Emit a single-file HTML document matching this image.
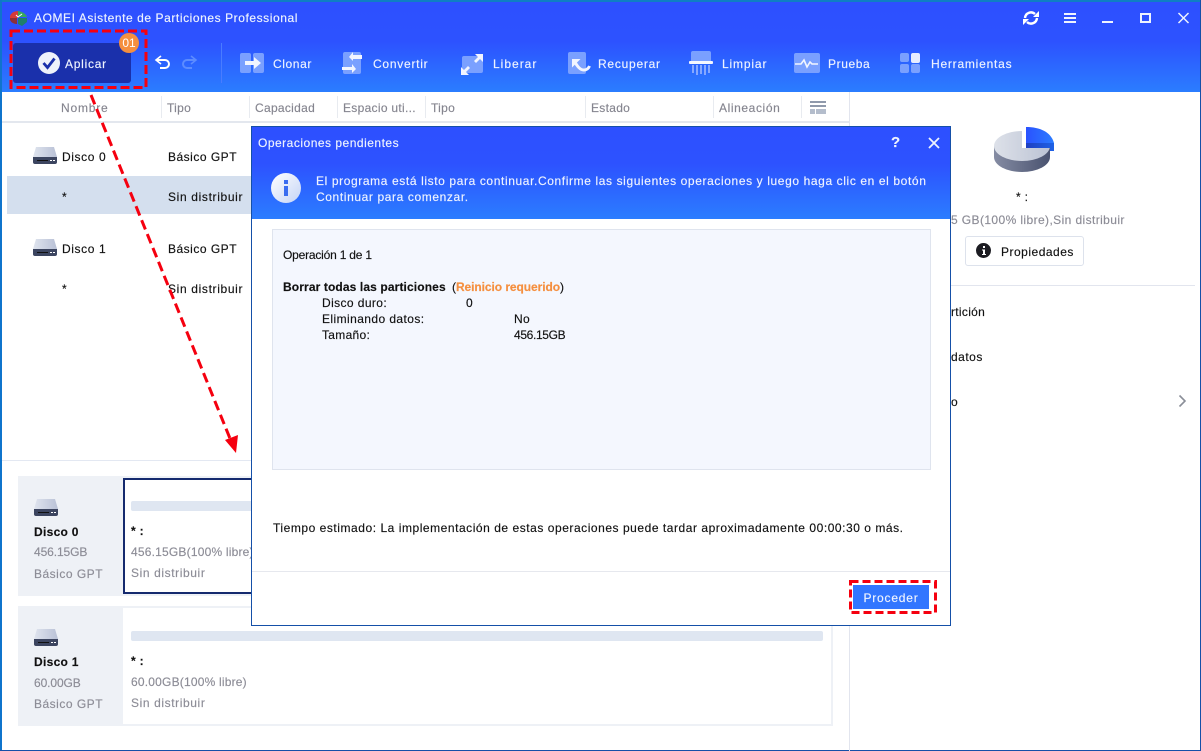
<!DOCTYPE html>
<html><head><meta charset="utf-8"><style>
html,body{margin:0;padding:0;background:#fff}
#r{position:relative;width:1201px;height:751px;overflow:hidden;background:#fff;font-family:"Liberation Sans",sans-serif;font-size:12px;color:#111}
#r div{position:absolute}
.t{white-space:nowrap;line-height:16px;letter-spacing:.3px;-webkit-text-stroke:.15px currentColor}
.w{color:#eef3ff}
.g{color:#8c8c96}
.h{color:#85858f}
svg{position:absolute;overflow:visible}
</style></head><body><div id="r">
<div style="left:0;top:0;width:1201px;height:92px;background:linear-gradient(#2d50ff 0,#2d52ff 45%,#2b7dff 100%)"></div>
<div style="left:0;top:0;width:1201px;height:2px;background:#0f7fc4"></div>
<div style="left:0;top:0;width:2px;height:751px;background:#0f74cc"></div>
<div style="left:1200px;top:0;width:1px;height:751px;background:#1550a8"></div>
<div style="left:0;top:750px;width:1201px;height:1px;background:#1550a8"></div>

<svg style="left:9px;top:10px" width="20" height="16" viewBox="0 0 20 16"><path d="M1 6Q3 1 9 1V8L1 8Z" fill="#d43a3a"/><path d="M1 8H8V14Q3 14 1 10Z" fill="#8c2f3a"/><path d="M9 1Q16 2 18 7H9Z" fill="#38a85a"/><path d="M9 8H18V12L13 16 9 14Z" fill="#1f7f6a"/><path d="M7 5l2 2 4-3" stroke="#fff" fill="none"/></svg>
<div class="t w" style="left:34px;top:10px;letter-spacing:.57px">AOMEI Asistente de Particiones Professional</div>

<svg style="left:1023px;top:10px" width="16" height="16" viewBox="0 0 16 16" fill="none" stroke="#fff" stroke-width="2.400"><path d="M2 8a6 6 0 0 1 10-4"/><path d="M14 8a6 6 0 0 1-10 4"/><path d="M10 7h6V1z" fill="#fff" stroke="none"/><path d="M6 9H0v6z" fill="#fff" stroke="none"/></svg>
<div style="left:1064px;top:13px;width:12px;height:2px;background:#eef3ff"></div>
<div style="left:1064px;top:17px;width:12px;height:2px;background:#eef3ff"></div>
<div style="left:1064px;top:21px;width:12px;height:2px;background:#eef3ff"></div>
<div style="left:1102px;top:21px;width:11px;height:2px;background:#eef3ff"></div>
<div style="left:1140px;top:13px;width:7px;height:6px;border:2px solid #eef3ff"></div>
<svg style="left:1178px;top:13px" width="11" height="10" viewBox="0 0 11 10" stroke="#eef3ff" stroke-width="1.500"><path d="M.5 0l10 10M10.500 0L.5 10"/></svg>

<div style="left:13px;top:43px;width:118px;height:40px;background:#1a30ab;border-radius:3px"></div>
<svg style="left:38px;top:52px" width="22" height="22" viewBox="0 0 22 22"><circle cx="11" cy="11" r="11" fill="#eef2fb"/><path d="M5.500 11l4 4.500 7-9" stroke="#1a30ab" stroke-width="2.800" fill="none"/></svg>
<div class="t w" style="left:65px;top:56px;letter-spacing:.75px">Aplicar</div>
<div style="left:119px;top:33px;width:20px;height:20px;border-radius:50%;background:#f58f3f;color:#fff;text-align:center;line-height:20px;font-size:12px">01</div>
<svg style="left:155px;top:56px" width="16" height="14" viewBox="0 0 16 14" fill="none" stroke="#fff" stroke-width="2"><path d="M2 4h8a3.500 3.500 0 0 1 0 8H5"/><path d="M6 0L1 4l5 4" stroke-width="1.600"/></svg>
<svg style="left:181px;top:56px" width="16" height="14" viewBox="0 0 16 14" fill="none" stroke="#5c8cff" stroke-width="2"><path d="M14 4H6a3.500 3.500 0 0 0 0 8h5"/><path d="M10 0l5 4-5 4" stroke-width="1.600"/></svg>
<div style="left:221px;top:43px;width:1px;height:40px;background:#4a7cff"></div>

<svg style="left:240px;top:53px" width="24" height="20" viewBox="0 0 24 20"><rect x="0" y="0" width="11" height="20" rx="2" fill="#7aa0ff"/><rect x="13" y="0" width="11" height="20" rx="2" fill="#7aa0ff"/><path d="M5 8h9V4l7 6-7 6v-4H5z" fill="#f2f5ff"/></svg>
<div class="t w" style="left:273px;top:56px;letter-spacing:.6px">Clonar</div>
<svg style="left:342px;top:52px" width="20" height="22" viewBox="0 0 20 22"><rect x="1" y="0" width="18" height="22" rx="2" fill="#7aa0ff"/><path d="M20 3h-9V0l-4 5 4 4V7h9zM0 15h10v-3l4 5-4 4v-3H0z" fill="#f2f5ff"/></svg>
<div class="t w" style="left:373px;top:56px;letter-spacing:.75px">Convertir</div>
<svg style="left:461px;top:54px" width="23" height="21" viewBox="0 0 23 21"><rect x="1" y="2" width="21" height="17" rx="2" fill="#7aa0ff"/><path d="M14 0h8v8l-3-3-4 4-2-2 4-4zM0 21v-8l3 3 4-4 2 2-4 4 3 3z" fill="#f2f5ff"/></svg>
<div class="t w" style="left:493px;top:56px;letter-spacing:1px">Liberar</div>
<svg style="left:568px;top:52px" width="23" height="22" viewBox="0 0 23 22"><rect x="0" y="0" width="18" height="22" rx="2" fill="#7aa0ff"/><path d="M4 7h8.500L4 15.500z" fill="#f2f5ff"/><path d="M6.500 9.500c3 5 5.500 8.500 9.500 8.500 2.500 0 4.500-1.500 5.500-4" fill="none" stroke="#f2f5ff" stroke-width="3"/></svg>
<div class="t w" style="left:598px;top:56px;letter-spacing:.75px">Recuperar</div>
<svg style="left:689px;top:51px" width="24" height="24" viewBox="0 0 24 24"><rect x="2" y="0" width="20" height="12" rx="2" fill="#7aa0ff"/><rect x="0" y="10" width="24" height="3" rx="1" fill="#f4f7ff"/><path d="M3 14h2v8H3zM7 14h2v10H7zM11 14h2v9h-2zM15 14h2v10h-2zM19 14h2v8h-2z" fill="#86a8ff"/></svg>
<div class="t w" style="left:722px;top:56px;letter-spacing:.85px">Limpiar</div>
<svg style="left:794px;top:53px" width="26" height="20" viewBox="0 0 26 20"><rect width="26" height="20" rx="2" fill="#7aa0ff"/><path d="M1 11h6l3-4 3 7 3-5 2 2h6" stroke="#f2f5ff" stroke-width="1.600" fill="none"/></svg>
<div class="t w" style="left:828px;top:56px;letter-spacing:.6px">Prueba</div>
<svg style="left:900px;top:53px" width="20" height="20" viewBox="0 0 20 20"><rect width="9" height="9" rx="2" fill="#7aa0ff"/><rect x="11" width="9" height="10" rx="2" fill="#e6ecff"/><rect y="11" width="9" height="9" rx="2" fill="#7aa0ff"/><rect x="11" y="11" width="9" height="9" rx="2" fill="#7aa0ff"/></svg>
<div class="t w" style="left:931px;top:56px;letter-spacing:.78px">Herramientas</div>

<div style="left:849px;top:92px;width:1px;height:659px;background:#e2e5ee"></div>
<div style="left:2px;top:121px;width:847px;height:2px;background:#e3e7ee"></div>
<div style="left:161px;top:96px;width:1px;height:22px;background:#e8ebf0"></div>
<div style="left:249px;top:96px;width:1px;height:22px;background:#e8ebf0"></div>
<div style="left:337px;top:96px;width:1px;height:22px;background:#e8ebf0"></div>
<div style="left:425px;top:96px;width:1px;height:22px;background:#e8ebf0"></div>
<div style="left:585px;top:96px;width:1px;height:22px;background:#e8ebf0"></div>
<div style="left:713px;top:96px;width:1px;height:22px;background:#e8ebf0"></div>
<div style="left:801px;top:96px;width:1px;height:22px;background:#e8ebf0"></div>
<div class="t h" style="left:61px;top:100px;letter-spacing:.8px">Nombre</div>
<div class="t h" style="left:167px;top:100px">Tipo</div>
<div class="t h" style="left:255px;top:100px">Capacidad</div>
<div class="t h" style="left:343px;top:100px">Espacio uti...</div>
<div class="t h" style="left:431px;top:100px">Tipo</div>
<div class="t h" style="left:591px;top:100px">Estado</div>
<div class="t h" style="left:719px;top:100px;letter-spacing:.6px">Alineación</div>
<svg style="left:810px;top:101px" width="16" height="13" viewBox="0 0 16 13"><path d="M0 0h16v2H0zM0 4h16v2H0z" fill="#8f99ab"/><path d="M0 8h5v5H0zM6 8h10v5H6z" fill="#b4bdcc"/></svg>

<div style="left:7px;top:176px;width:245px;height:38px;background:#d4dfee"></div>
<svg style="left:33px;top:147px" width="24" height="17" viewBox="0 0 24 17"><defs><linearGradient id="dg" x1="0" x2="1"><stop offset="0" stop-color="#dfe4ee"/><stop offset="1" stop-color="#b9c1d6"/></linearGradient></defs><path d="M3 0h18l3 10H0z" fill="url(#dg)"/><path d="M0 10h24v5a2 2 0 0 1-2 2H2a2 2 0 0 1-2-2z" fill="#3c4560"/><path d="M4 13h11v1H4z" fill="#111"/><path d="M17 13h2v1h-2zM20 13h2v1h-2z" fill="#fff"/></svg>
<svg style="left:33px;top:239px" width="24" height="17" viewBox="0 0 24 17"><path d="M3 0h18l3 10H0z" fill="url(#dg)"/><path d="M0 10h24v5a2 2 0 0 1-2 2H2a2 2 0 0 1-2-2z" fill="#3c4560"/><path d="M4 13h11v1H4z" fill="#111"/><path d="M17 13h2v1h-2zM20 13h2v1h-2z" fill="#fff"/></svg>
<div class="t" style="left:62px;top:149px;letter-spacing:.6px">Disco 0</div>
<div class="t" style="left:168px;top:149px;letter-spacing:.5px">Básico GPT</div>
<div class="t" style="left:62px;top:189px">*</div>
<div class="t" style="left:168px;top:189px;letter-spacing:.65px">Sin distribuir</div>
<div class="t" style="left:62px;top:241px;letter-spacing:.6px">Disco 1</div>
<div class="t" style="left:168px;top:241px;letter-spacing:.5px">Básico GPT</div>
<div class="t" style="left:62px;top:281px">*</div>
<div class="t" style="left:168px;top:281px;letter-spacing:.65px">Sin distribuir</div>

<div style="left:2px;top:460px;width:847px;height:1px;background:#e3e8f2"></div>
<div style="left:18px;top:476px;width:105px;height:120px;background:#eef1f6"></div>
<div style="left:123px;top:476px;width:710px;height:120px;background:#eef1f6"></div>
<div style="left:123px;top:478px;width:702px;height:112px;background:#fff;border:2px solid #152a6e"></div>
<div style="left:131px;top:501px;width:692px;height:10px;background:#dfe6f1;border-radius:2px"></div>
<div style="left:18px;top:606px;width:815px;height:120px;background:#eef1f6"></div>
<div style="left:123px;top:608px;width:708px;height:116px;background:#fff"></div>
<div style="left:131px;top:631px;width:692px;height:10px;background:#dfe6f1;border-radius:2px"></div>
<svg style="left:34px;top:499px" width="24" height="17" viewBox="0 0 24 17"><path d="M3 0h18l3 10H0z" fill="url(#dg)"/><path d="M0 10h24v5a2 2 0 0 1-2 2H2a2 2 0 0 1-2-2z" fill="#3c4560"/><path d="M4 13h11v1H4z" fill="#111"/><path d="M17 13h2v1h-2zM20 13h2v1h-2z" fill="#fff"/></svg>
<svg style="left:34px;top:629px" width="24" height="17" viewBox="0 0 24 17"><path d="M3 0h18l3 10H0z" fill="url(#dg)"/><path d="M0 10h24v5a2 2 0 0 1-2 2H2a2 2 0 0 1-2-2z" fill="#3c4560"/><path d="M4 13h11v1H4z" fill="#111"/><path d="M17 13h2v1h-2zM20 13h2v1h-2z" fill="#fff"/></svg>
<div class="t" style="left:34px;top:524px;font-weight:bold">Disco 0</div>
<div class="t g" style="left:34px;top:544px;letter-spacing:-.1px">456.15GB</div>
<div class="t g" style="left:34px;top:566px;letter-spacing:.5px">Básico GPT</div>
<div class="t" style="left:131px;top:523px;font-weight:bold">* :</div>
<div class="t g" style="left:131px;top:544px;letter-spacing:.2px">456.15GB(100% libre)</div>
<div class="t g" style="left:131px;top:565px;letter-spacing:.6px">Sin distribuir</div>
<div class="t" style="left:34px;top:654px;font-weight:bold">Disco 1</div>
<div class="t g" style="left:34px;top:675px;letter-spacing:-.1px">60.00GB</div>
<div class="t g" style="left:34px;top:696px;letter-spacing:.5px">Básico GPT</div>
<div class="t" style="left:131px;top:653px;font-weight:bold">* :</div>
<div class="t g" style="left:131px;top:674px;letter-spacing:.2px">60.00GB(100% libre)</div>
<div class="t g" style="left:131px;top:695px;letter-spacing:.6px">Sin distribuir</div>

<svg style="left:994px;top:127px" width="60" height="46" viewBox="0 0 60 46"><defs><linearGradient id="p1" x1="0" x2="1"><stop offset="0" stop-color="#dde1e9"/><stop offset="1" stop-color="#bcc3d4"/></linearGradient><linearGradient id="p2" x1="0" x2="1"><stop offset="0" stop-color="#858ca3"/><stop offset="1" stop-color="#49526f"/></linearGradient><linearGradient id="p3" x1="0" x2="1"><stop offset="0" stop-color="#2a52ff"/><stop offset="1" stop-color="#2b7cff"/></linearGradient><linearGradient id="p4" x1="0" x2="1"><stop offset="0" stop-color="#1f3fc0"/><stop offset="1" stop-color="#1f62e6"/></linearGradient></defs><path d="M0 19v11A28 15 0 0 0 56 30V19z" fill="url(#p2)"/><ellipse cx="28" cy="19" rx="28" ry="15" fill="url(#p1)"/><path d="M28 0h32v21H28z" fill="#fff"/><path d="M32 0C46 0 57 5 60 16H32z" fill="url(#p3)"/><path d="M32 16H60V24H56V21H32z" fill="url(#p4)"/></svg>
<div class="t" style="left:1016px;top:189px">* :</div>
<div class="t g" style="left:951px;top:212px;letter-spacing:.4px">5 GB(100% libre),Sin distribuir</div>
<div style="left:965px;top:236px;width:117px;height:28px;border:1px solid #dde2ec;border-radius:3px"></div>
<svg style="left:976px;top:243px" width="15" height="15" viewBox="0 0 15 15"><circle cx="7.500" cy="7.500" r="7.500" fill="#1c1c22"/><path d="M7 3h2v2H7zM6 6.500h3V11h1v1H6v-1h1V7.500H6z" fill="#fff"/></svg>
<div class="t" style="left:1001px;top:244px;letter-spacing:.5px">Propiedades</div>
<div style="left:951px;top:285px;width:244px;height:1px;background:#e2e5ee"></div>
<div class="t" style="left:951px;top:304px">rtición</div>
<div class="t" style="left:951px;top:349px;letter-spacing:.5px">datos</div>
<div class="t" style="left:951px;top:394px">o</div>
<svg style="left:1178px;top:394px" width="9" height="14" viewBox="0 0 9 14" fill="none" stroke="#8a8e98" stroke-width="1.600"><path d="M1.500 1.500L7 7l-5.500 5.500"/></svg>

<div style="left:251px;top:126px;width:698px;height:498px;border:1px solid #1550a8;background:#fff"></div>
<div style="left:252px;top:127px;width:698px;height:92px;background:linear-gradient(#2d50ff 0,#2d52ff 40%,#2b7dff 100%)"></div>
<div class="t w" style="left:258px;top:135px;letter-spacing:.5px">Operaciones pendientes</div>
<div class="t w" style="left:891px;top:135px;font-size:15px;font-weight:bold">?</div>
<svg style="left:928px;top:137px" width="12" height="12" viewBox="0 0 12 12" stroke="#eef3ff" stroke-width="1.800"><path d="M1 1l10 10M11 1L1 11"/></svg>
<svg style="left:271px;top:173px" width="30" height="30" viewBox="0 0 30 30"><defs><linearGradient id="ic" x1="0" y1="0" x2="1" y2="1"><stop offset="0" stop-color="#fff"/><stop offset="1" stop-color="#c4d4f6"/></linearGradient></defs><circle cx="15" cy="15" r="15" fill="url(#ic)"/><path d="M13 7h4v4h-4zM13 13h4v10h-4z" fill="#3a6df0"/></svg>
<div class="t w" style="left:316px;top:173px;letter-spacing:.61px">El programa está listo para continuar.Confirme las siguientes operaciones y luego haga clic en el botón</div>
<div class="t w" style="left:316px;top:189px;letter-spacing:.61px">Continuar para comenzar.</div>

<div style="left:272px;top:229px;width:657px;height:239px;background:#f4f7fe;border:1px solid #dfe4ee"></div>
<div class="t" style="left:283px;top:247px;letter-spacing:-.2px">Operación 1 de 1</div>
<div class="t" style="left:283px;top:279px;font-weight:bold;letter-spacing:.12px">Borrar todas las particiones</div>
<div class="t" style="left:452px;top:279px;letter-spacing:-.07px">(<span style="color:#f58f3f;font-weight:bold">Reinicio requerido</span>)</div>
<div class="t" style="left:322px;top:295px;letter-spacing:.4px">Disco duro:</div>
<div class="t" style="left:466px;top:295px">0</div>
<div class="t" style="left:322px;top:311px;letter-spacing:.42px">Eliminando datos:</div>
<div class="t" style="left:514px;top:311px">No</div>
<div class="t" style="left:322px;top:327px">Tamaño:</div>
<div class="t" style="left:514px;top:327px;letter-spacing:-.35px">456.15GB</div>
<div class="t" style="left:273px;top:520px;letter-spacing:.54px">Tiempo estimado: La implementación de estas operaciones puede tardar aproximadamente 00:00:30 o más.</div>
<div style="left:252px;top:571px;width:698px;height:1px;background:#e6e8ee"></div>
<div style="left:853px;top:585px;width:76px;height:24px;background:#3276ff"></div>
<div class="t w" style="left:853px;top:590px;width:76px;text-align:center;letter-spacing:.8px">Proceder</div>

<svg style="left:0;top:0" width="1201" height="751" fill="none" stroke="#f5000f">
<rect x="11" y="31" width="135" height="56.500" stroke-width="3" stroke-dasharray="9 4"/>
<rect x="850.500" y="581.500" width="85" height="31" stroke-width="3" stroke-dasharray="8 4"/>
<path d="M91 95L231 441" stroke-width="3" stroke-dasharray="10 5"/>
<path d="M225 440L238 435 236 453z" fill="#f5000f" stroke="none"/>
</svg>
</div></body></html>
